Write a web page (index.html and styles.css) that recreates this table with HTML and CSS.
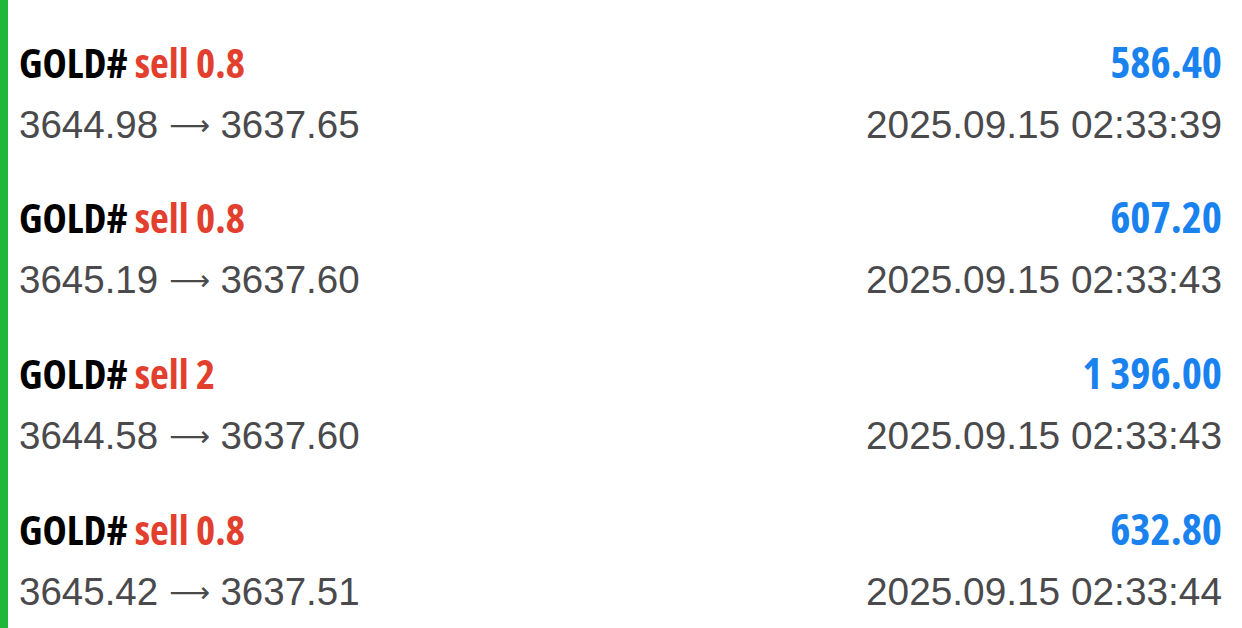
FILE: index.html
```html
<!DOCTYPE html>
<html>
<head>
<meta charset="utf-8">
<link rel="stylesheet" href="styles.css">
</head>
<body>
<div class="screen">
  <div class="bar"></div>
  <div class="list">
    <div class="deal">
      <div class="line">
        <div class="title"><span class="sym">GOLD#</span> <span class="side">sell 0.8</span></div>
        <div class="profit">586.40</div>
      </div>
      <div class="line detail">
        <div>3644.98 <span class="arrow">⟶</span> 3637.65</div>
        <div class="time">2025.09.15 02:33:39</div>
      </div>
    </div>
    <div class="deal">
      <div class="line">
        <div class="title"><span class="sym">GOLD#</span> <span class="side">sell 0.8</span></div>
        <div class="profit">607.20</div>
      </div>
      <div class="line detail">
        <div>3645.19 <span class="arrow">⟶</span> 3637.60</div>
        <div class="time">2025.09.15 02:33:43</div>
      </div>
    </div>
    <div class="deal">
      <div class="line">
        <div class="title"><span class="sym">GOLD#</span> <span class="side">sell 2</span></div>
        <div class="profit">1 396.00</div>
      </div>
      <div class="line detail">
        <div>3644.58 <span class="arrow">⟶</span> 3637.60</div>
        <div class="time">2025.09.15 02:33:43</div>
      </div>
    </div>
    <div class="deal">
      <div class="line">
        <div class="title"><span class="sym">GOLD#</span> <span class="side">sell 0.8</span></div>
        <div class="profit">632.80</div>
      </div>
      <div class="line detail">
        <div>3645.42 <span class="arrow">⟶</span> 3637.51</div>
        <div class="time">2025.09.15 02:33:44</div>
      </div>
    </div>
  </div>
</div>
</body>
</html>
```
FILE: styles.css
```css
html, body {
  margin: 0;
  padding: 0;
  background: #ffffff;
}
.screen {
  display: flex;
  width: 1242px;
  height: 628px;
  overflow: hidden;
}
.bar {
  width: 8px;
  flex: none;
  background: #1db83a;
}
.list {
  flex: 1;
  padding: 31.5px 20px 0 11px;
}
.deal {
  height: 155.7px;
  display: flex;
  flex-direction: column;
  flex: none;
}
.line {
  display: flex;
  justify-content: space-between;
  align-items: baseline;
  white-space: nowrap;
}
.title, .profit {
  font-family: "Open Sans", sans-serif;
  font-stretch: 75%;
  font-weight: 700;
  font-size: 41px;
  line-height: 60px;
}
.profit {
  font-size: 43px;
  color: #1a82ee;
}
.sym { color: #000000; }
.side { color: #e23f2e; }
.detail {
  font-family: "Liberation Sans", Arial, sans-serif;
  font-size: 38.5px;
  line-height: 66px;
  color: #4a4a4d;
}
.time {
  font-size: 38.8px;
}
.arrow {
  font-family: "DejaVu Sans", sans-serif;
  font-size: 28.5px;
  vertical-align: 3px;
}
```
